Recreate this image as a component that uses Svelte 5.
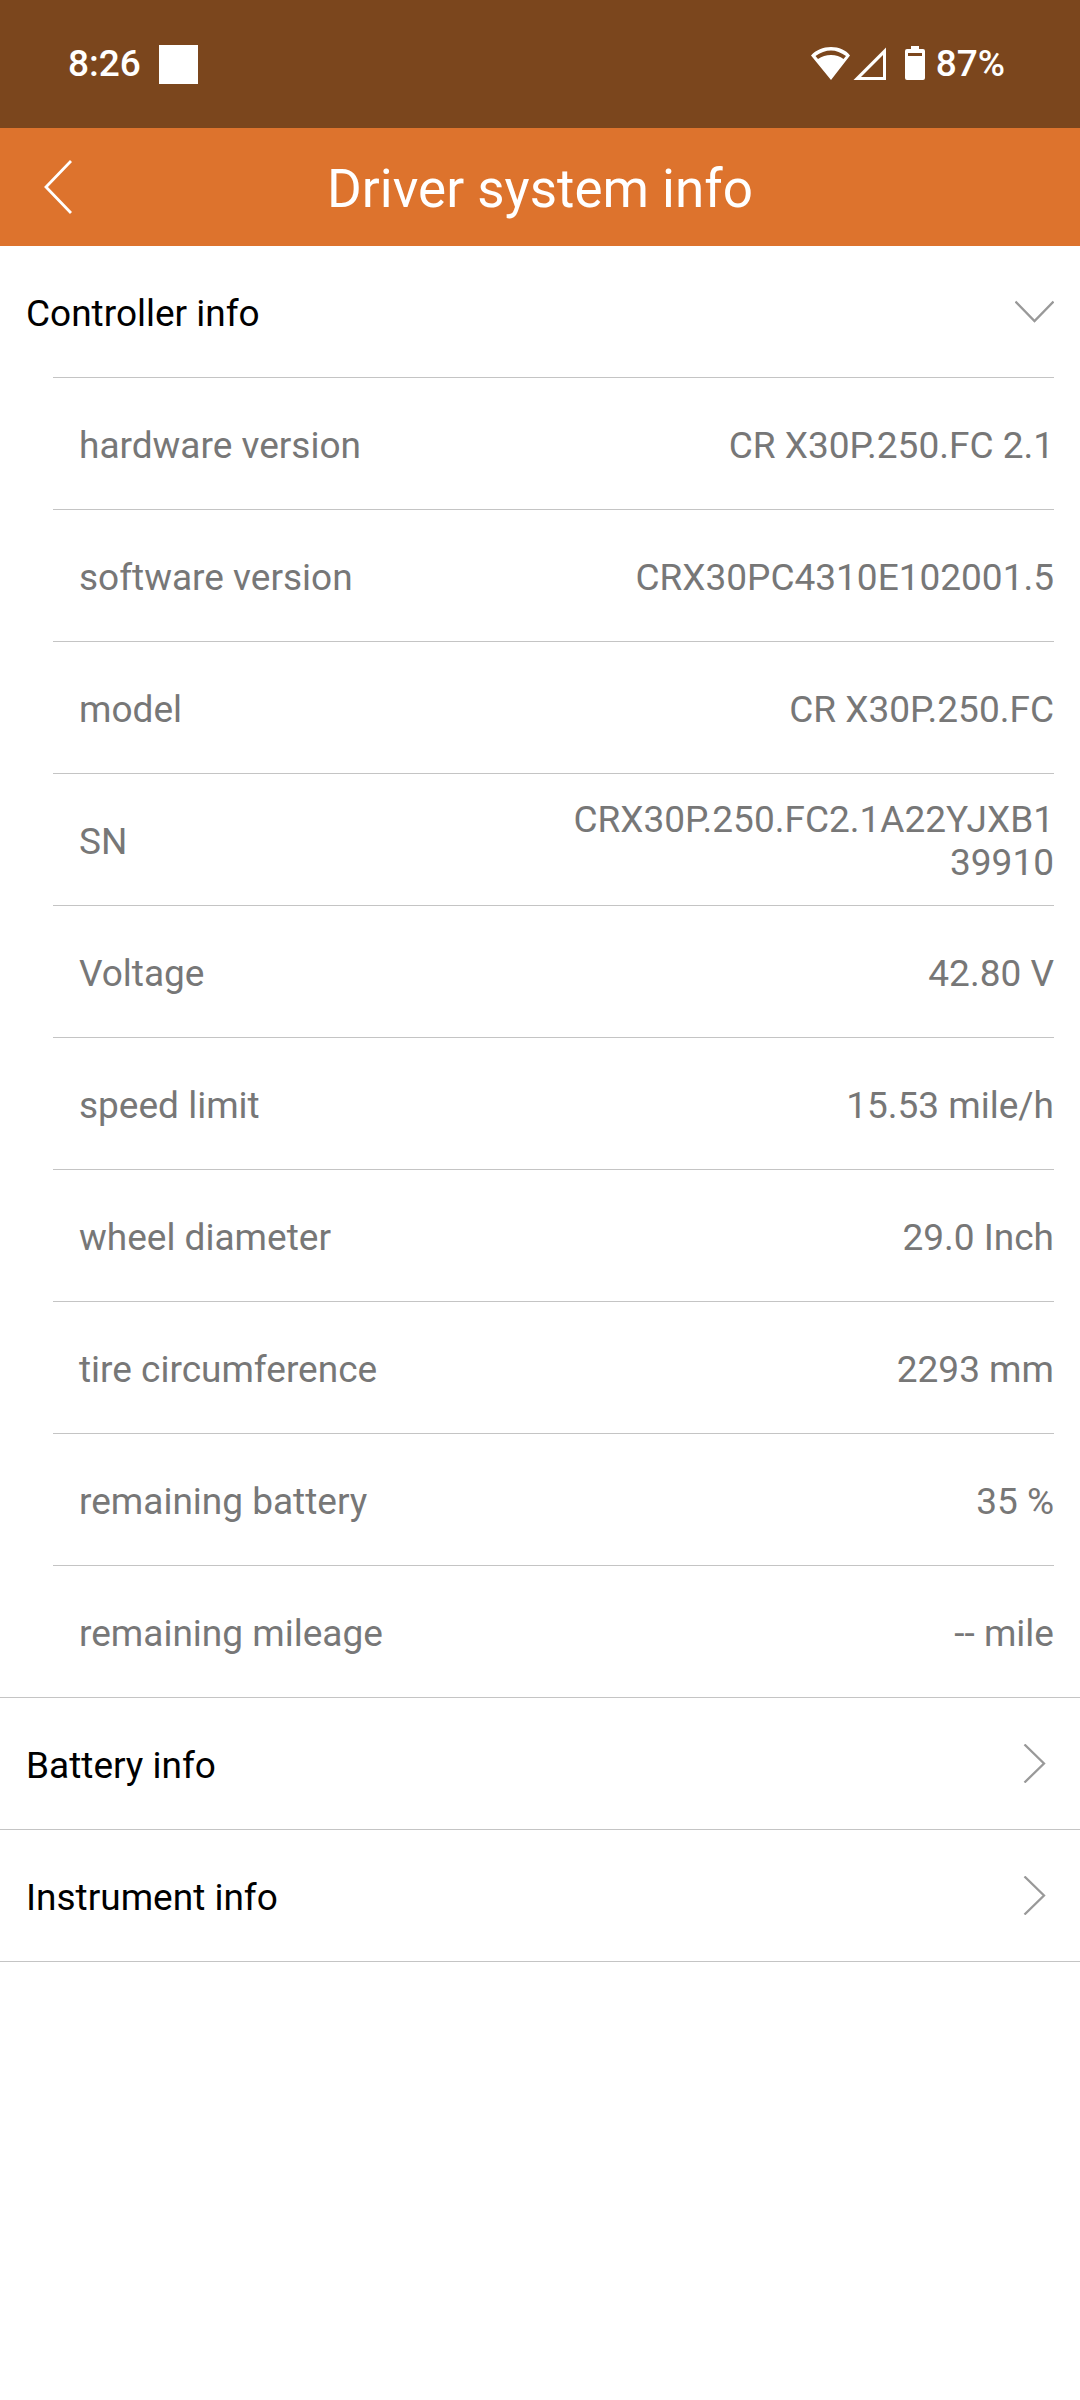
<script>
	let sections = [
		{
			title: 'Controller info',
			open: true,
			rows: [
				{ label: 'hardware version', value: 'CR X30P.250.FC 2.1' },
				{ label: 'software version', value: 'CRX30PC4310E102001.5' },
				{ label: 'model', value: 'CR X30P.250.FC' },
				{ label: 'SN', value: 'CRX30P.250.FC2.1A22YJXB139910' },
				{ label: 'Voltage', value: '42.80 V' },
				{ label: 'speed limit', value: '15.53 mile/h' },
				{ label: 'wheel diameter', value: '29.0 Inch' },
				{ label: 'tire circumference', value: '2293 mm' },
				{ label: 'remaining battery', value: '35 %' },
				{ label: 'remaining mileage', value: '-- mile' }
			]
		},
		{ title: 'Battery info', open: false, rows: [] },
		{ title: 'Instrument info', open: false, rows: [] }
	];

	function toggle(i) {
		sections[i].open = !sections[i].open;
	}
</script>

<div class="status">
	<div class="left">
		<span class="clock">8:26</span>
		<span class="square"></span>
	</div>
	<div class="right">
		<svg width="76" height="34" viewBox="0 0 76 34" aria-hidden="true">
			<path
				fill="#fff"
				fill-rule="evenodd"
				d="M20 34 L0 9.5 C5 4 12 1 20 1 S35 4 39 9.5 Z M4.5 10 L7 13 C11 10.5 15 9 20 9 S29 10.5 32.5 13 L35 10 C30 6.5 25 4.5 20 4.5 S9 6.5 4.5 10 Z"
			/>
			<path fill="#fff" fill-rule="evenodd" d="M75 1.5 V34 H42.5 Z M72 9 L50 31 H72 Z" />
		</svg>
		<svg class="battery" width="20" height="34" viewBox="0 0 20 34" aria-hidden="true">
			<path
				fill="#fff"
				fill-rule="evenodd"
				d="M6 0 H14 V3 H18 Q20 3 20 5 V32 Q20 34 18 34 H2 Q0 34 0 32 V5 Q0 3 2 3 H6 Z M3 7 V10 H17 V7 Z"
			/>
		</svg>
		<span>87%</span>
	</div>
</div>

<header>
	<button class="back" aria-label="Back">
		<svg width="28" height="54" viewBox="0 0 28 54" aria-hidden="true">
			<path d="M27 1 L2 27 L27 53" fill="none" stroke="#fff" stroke-width="2.8" />
		</svg>
	</button>
	<h1>Driver system info</h1>
</header>

<main>
	{#each sections as section, i}
		<section>
			<button class="heading" aria-expanded={section.open} on:click={() => toggle(i)}>
				<span>{section.title}</span>
				<svg class:open={section.open} width="39" height="39" viewBox="0 0 39 39" aria-hidden="true">
					<path d="M9.5 0.5 L29 19.5 L9.5 38.5" fill="none" stroke="#999" stroke-width="2.3" />
				</svg>
			</button>
			{#if section.open}
				<dl>
					{#each section.rows as row}
						<div class="row">
							<dt>{row.label}</dt>
							<dd>{row.value}</dd>
						</div>
					{/each}
				</dl>
			{/if}
		</section>
	{/each}
</main>

<style>
	:global(body) {
		margin: 0;
		background: #fff;
		font-family: Roboto, sans-serif;
		font-size: 37px;
		line-height: 43px;
	}
	.status {
		display: flex;
		justify-content: space-between;
		align-items: center;
		box-sizing: border-box;
		height: 128px;
		padding: 0 75px 0 68px;
		background: #7b461d;
		color: #fff;
		font-weight: 500;
	}
	.left,
	.right {
		display: flex;
		align-items: center;
	}
	.left {
		gap: 18px;
	}
	.clock,
	.right {
		padding-bottom: 2px;
	}
	.square {
		width: 39px;
		height: 39px;
		background: #fff;
	}
	.battery {
		margin: 0 11px 0 18px;
	}
	header {
		display: grid;
		grid-template-columns: 116px 1fr 116px;
		align-items: center;
		height: 118px;
		background: #dd732d;
		color: #fff;
	}
	button {
		border: none;
		background: none;
		color: inherit;
		font: inherit;
		cursor: pointer;
	}
	.back {
		display: flex;
		align-items: center;
		height: 100%;
		padding: 0 0 0 44px;
	}
	h1 {
		margin: 0;
		padding-top: 4px;
		font-size: 53px;
		line-height: 62px;
		font-weight: 400;
		text-align: center;
	}
	section {
		border-bottom: 1px solid #c4c4c4;
	}
	.heading {
		display: flex;
		justify-content: space-between;
		align-items: center;
		width: 100%;
		height: 131px;
		padding: 0 26px;
		color: #000;
	}
	.heading span,
	dt,
	dd {
		padding-top: 3px;
	}
	.open {
		transform: rotate(90deg);
	}
	dl {
		margin: 0 26px 0 53px;
	}
	.row {
		display: flex;
		justify-content: space-between;
		align-items: center;
		min-height: 131px;
		padding-left: 26px;
		border-top: 1px solid #c4c4c4;
		color: #777;
	}
	dd {
		max-width: 50%;
		margin: 0;
		text-align: right;
		overflow-wrap: anywhere;
	}
</style>
